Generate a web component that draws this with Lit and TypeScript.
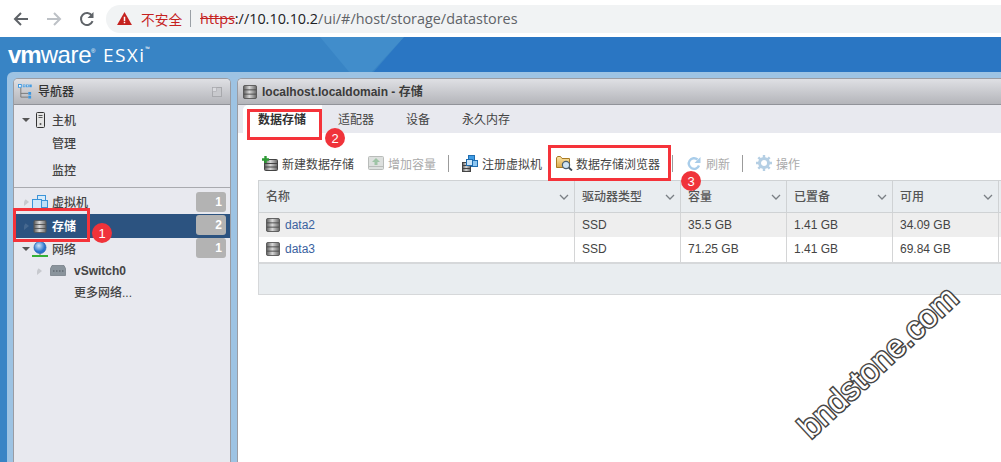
import { LitElement, html, css, svg } from "lit";
import { customElement } from "lit/decorators.js";

const defs = svg`<defs>
<linearGradient id="dbg" x1="0" x2="1" y1="0" y2="0"><stop offset="0" stop-color="#5e5e5e"/><stop offset=".45" stop-color="#d8d8d8"/><stop offset="1" stop-color="#666"/></linearGradient>
<radialGradient id="globe" cx=".4" cy=".35"><stop offset="0" stop-color="#cfe6fb"/><stop offset="1" stop-color="#2a73cc"/></radialGradient>
<linearGradient id="folder" x1="0" x2="0" y1="0" y2="1"><stop offset="0" stop-color="#fbe6a8"/><stop offset="1" stop-color="#dba94a"/></linearGradient>
</defs>`;

const db = (w = 15, h = 15) => html`<svg class="ic" width=${w} height=${h} viewBox="0 0 15 15">
  <rect x=".5" y=".5" width="14" height="14" rx="1.5" fill="url(#dbg)" stroke="#555"/>
  <path d="M1 5.2h13M1 9.8h13" stroke="#4a4a4a" stroke-width="1"/>
</svg>`;

const sortIcon = html`<svg class="chev" width="10" height="6" viewBox="0 0 10 6"><path d="M1 1l4 4 4-4" fill="none" stroke="#7a7f84" stroke-width="1.3"/></svg>`;

@customElement("app-root")
export class AppRoot extends LitElement {
  static styles = css`
    :host { display: block; position: relative; width: 1001px; height: 462px; overflow: hidden; background: #fff;
      font-family: "Liberation Sans", "Noto Sans CJK SC", sans-serif; font-size: 12px; color: #333; }
    .ic { flex: none; display: block; }
    .browser { height: 37px; display: flex; align-items: center; background: #fff; box-sizing: border-box; }
    .navbtns { display: flex; align-items: center; gap: 17px; padding-left: 13px; width: 106px; box-sizing: border-box; flex: none; }
    .pill { flex: 1; height: 28px; margin-right: -30px; border-radius: 14px; background: #f1f3f4; display: flex; align-items: center; padding-left: 11px;
      font-family: "Open Sans", "Noto Sans CJK SC", sans-serif; font-size: 14.4px; }
    .insecure { color: #c5221f; margin-left: 9px; font-family: "Noto Sans CJK SC", sans-serif; font-size: 13.7px; }
    .vsep { width: 1px; height: 17px; background: #9aa0a6; margin: 0 9px 0 8px; }
    .https { color: #c5221f; text-decoration: line-through; }
    .host { color: #202124; }
    .path { color: #5f6368; }
    .page { height: 425px; background: #3884c5; position: relative; display: flex; flex-direction: column; }
    .sky { position: absolute; left: 0; top: 0; }
    .brand { height: 35px; display: flex; align-items: center; padding-left: 8px; color: #fff; position: relative; }
    .vm { font-size: 24px; width: 95px; letter-spacing: -.4px; line-height: 1; display: flex; align-items: baseline; font-family: "Liberation Sans", sans-serif; }
    .vm b { font-weight: 700; letter-spacing: -1px; }
    .vm sup { font-size: 6px; line-height: 1; align-self: flex-start; margin-top: 5px; }
    .esxi { font-size: 19px; letter-spacing: 1.4px; font-family: "Open Sans", sans-serif; display: flex; }
    .esxi sup { font-size: 6px; line-height: 1; margin-top: 4px; letter-spacing: 0; }
    .frame { flex: 1; margin-left: 7px; background: #9dc3e3; border-radius: 6px 0 0 0; padding: 6px 0 0 6px; display: flex; gap: 6px; position: relative; }
    .panel { background: #e8e9ef; border-radius: 5px 5px 0 0; display: flex; flex-direction: column; border: 1px solid #9a9ca3; border-bottom: 0; overflow: hidden; }
    .left { width: 218px; flex: none; box-sizing: border-box; }
    .right { flex: 1; border-right: 0; border-radius: 5px 0 0 0; }
    .phead { height: 26px; flex: none; box-sizing: border-box; display: flex; align-items: center; gap: 5px; background: linear-gradient(#dfe0e4, #b4b5ba); border-bottom: 1px solid #919399;
      font-size: 12px; color: #333; padding: 0 8px 0 4px; font-weight: 500; }
    .phead.main { padding-left: 5px; }
    .phead .t { flex: 1; margin-bottom: 2px; }
    .ptitle { font-weight: 700; color: #3b3b3b; font-size: 12px; }
    .group { display: flex; flex-direction: column; }
    .g1 { padding: 3px 0 5px; border-bottom: 1px solid #a9aaaf; }
    .g2 { padding-top: 2px; }
    .row { height: 24px; display: flex; align-items: center; position: relative; font-weight: 500; color: #444; }
    .tri { width: 0; height: 0; flex: none; margin-left: 8px; }
    .tri.down { border-left: 4px solid transparent; border-right: 4px solid transparent; border-top: 4px solid #555; }
    .tri.right { border-top: 4px solid transparent; border-bottom: 4px solid transparent; border-left: 5px solid #c7c9ce; margin-left: 10px; }
    .icn { width: 20px; display: flex; justify-content: center; flex: none; }
    .icn.w21 { width: 21px; }
    .lbl { margin-left: 2px; margin-bottom: 2px; }
    .sub { padding: 0 0 2px 38px; height: 23px; box-sizing: border-box; }
    .sub2 { margin-top: 3px; height: 24px; }
    .sel { background: #2c5380; color: #fff; font-weight: 700; }
    .sel .tri.right { border-left-color: #46688f; }
    .badge { position: absolute; right: 4px; top: 2px; width: 30px; height: 20px; box-sizing: border-box; background: #b3b3b3; border-radius: 3px; color: #fff; font-weight: 700; font-size: 12px; display: flex; align-items: center; justify-content: flex-end; padding-right: 4px; }
    .sel .badge { top: 1px; }
    .h22 { height: 22px; } .h21 { height: 21px; }
    .h22 .badge { top: 0; }
    .vs { padding-left: 23px; color: #444; font-weight: 700; }
    .vs .tri.right { margin-left: 0; }
    .sw { margin-left: 8px; }
    .vs .lbl { margin-left: 8px; margin-bottom: 0; }
    .more { padding: 0 0 2px 60px; height: 22px; box-sizing: border-box; }
    .tabs { height: 28px; flex: none; display: flex; padding-left: 5px; align-items: flex-end; }
    .tab { height: 28px; display: flex; align-items: center; box-sizing: border-box; padding-bottom: 2px; color: #444; }
    .tab.on { background: #fff; border-radius: 5px 0 0 0; font-weight: 700; color: #333; width: 79px; padding-left: 15px; height: 28px; }
    .tab.w2 { width: 84px; padding-left: 16px; }
    .tab.w3 { width: 56px; }
    .content { flex: 1; background: #fff; padding: 16px 0 0 20px; }
    .tools { height: 28px; margin-bottom: 3px; display: flex; align-items: center; padding-left: 4px; color: #444; }
    .tool { display: flex; align-items: center; gap: 4px; white-space: nowrap; }
    .tool.gapl { margin-left: 14px; }
    .tool.tight { gap: 3px; }
    .dis { color: #aaa; }
    .tsep { width: 1px; height: 17px; background: #9b9b9b; margin: 0 13px 0 12px; }
    table { border-collapse: collapse; table-layout: fixed; width: 744px; color: #444; }
    th { height: 32px; background: #e9edf0; border: 1px solid #cfd2d4; font-weight: 500; text-align: left; padding: 0 7px 2px; position: relative; box-sizing: border-box; color: #555; }
    th .chev { position: absolute; right: 5px; top: 13px; }
    td { height: 24.5px; padding: 0 7px; border-left: 1px solid #d4d5d6; box-sizing: border-box; font-size: 12px; }
    tr.a td { background: #eeeeee; } tr.b td { background: #fff; }
    td:first-child { border-left: 1px solid #cfd2d4; }
    .name { display: flex; align-items: center; gap: 5px; color: #3a62a0; }
    .foot { width: 744px; height: 33px; box-sizing: border-box; background: #e9edf0; border: 1px solid #d6d8da; border-top: 2px solid #d6d8da; }
    .mark { position: absolute; box-sizing: border-box; border: 3px solid #f5333a; pointer-events: none; }
    .m1 { left: 13px; top: 208px; width: 77px; height: 34px; }
    .m2 { left: 247px; top: 109px; width: 75px; height: 31px; }
    .m3 { left: 548px; top: 145px; width: 123px; height: 36px; }
    .dot { position: absolute; width: 20px; height: 20px; border-radius: 50%; background: #f0333a; color: #fff; font-size: 13px; display: flex; align-items: center; justify-content: center; font-family: "Liberation Sans", sans-serif; }
    .d1 { left: 92px; top: 223px; }
    .d2 { left: 325px; top: 128px; }
    .d3 { left: 681px; top: 171px; }
    .wm { position: absolute; left: 766px; top: 344px; width: 224px; text-align: center; transform: rotate(-43deg); font-family: "Liberation Sans", sans-serif; font-weight: 400; font-size: 32px; line-height: 36px; letter-spacing: .3px; color: #fff;
      -webkit-text-stroke: 3px #4a4a4a; paint-order: stroke fill; text-shadow: 1px 1px 1px rgba(0,0,0,.3); white-space: nowrap; }
  `;

  render() {
    return html`
      <svg width="0" height="0" style="position:absolute">${defs}</svg>
      <div class="browser">
        <div class="navbtns">
          <svg class="ic" width="16" height="16" viewBox="0 0 16 16"><path d="M15 8H2M8 2L2 8l6 6" fill="none" stroke="#5f6368" stroke-width="2"/></svg>
          <svg class="ic" width="16" height="16" viewBox="0 0 16 16"><path d="M1 8h13M8 2l6 6-6 6" fill="none" stroke="#bdc1c6" stroke-width="2"/></svg>
          <svg class="ic" width="16" height="16" viewBox="0 0 16 16"><path d="M13.6 10.2A6 6 0 1 1 13 4.6" fill="none" stroke="#5f6368" stroke-width="2"/><path d="M14.5 1v6h-6z" fill="#5f6368"/></svg>
        </div>
        <div class="pill">
          <svg class="ic" width="15" height="13" viewBox="0 0 16 14"><path d="M8 0l8 14H0z" fill="#c5221f"/><path d="M7.2 5h1.6v4.6H7.2zM7.2 10.6h1.6v1.6H7.2z" fill="#fff"/></svg>
          <span class="insecure">不安全</span><span class="vsep"></span>
          <span class="https">https</span><span class="host">://10.10.10.2</span><span class="path">/ui/#/host/storage/datastores</span>
        </div>
      </div>
      <div class="page">
        <svg class="sky" width="1001" height="60" viewBox="0 0 1001 60"><path d="M404 0H1001V60H352z" fill="#2a76c3"/><path d="M320 0H404L360 48z" fill="#418dcb"/></svg>
        <div class="brand">
          <span class="vm"><b>vm</b>ware<sup>®</sup></span>
          <span class="esxi">ESXi<sup>™</sup></span>
        </div>
        <div class="frame">
          <div class="panel left">
            <div class="phead">
              <svg class="ic" width="15" height="17" viewBox="0 0 16 18"><path d="M3 5v10h8M3 11h8" fill="none" stroke="#777"/><rect x=".5" y="1.5" width="3" height="3" fill="#fff" stroke="#3b96df"/><rect x="5.5" y="2" width="2" height="2" fill="#fff" stroke="#3b96df" stroke-width=".8"/><rect x="9" y="2" width="2" height="2" fill="#fff" stroke="#3b96df" stroke-width=".8"/><rect x="12.5" y="2" width="2" height="2" fill="#fff" stroke="#3b96df" stroke-width=".8"/><rect x="11" y="9.500" width="3" height="3" fill="#3b96df"/><rect x="11" y="13.500" width="3" height="3" fill="#3b96df"/></svg>
              <span class="t">导航器</span>
              <svg class="ic" width="10" height="10" viewBox="0 0 10 10"><rect x=".5" y=".5" width="9" height="9" fill="#c8c9cd" stroke="#a8a9ad"/><rect x=".5" y=".5" width="4" height="4" fill="#dadbdf" stroke="#a8a9ad" stroke-width=".6"/></svg>
            </div>
            <div class="group g1">
              <div class="row"><span class="tri down"></span><span class="icn"><svg class="ic" width="9" height="16" viewBox="0 0 9 16"><rect x=".5" y=".5" width="8" height="15" rx="1" fill="#e4e4e4" stroke="#333"/><path d="M2.5 3.500h4M2.5 5.500h4" stroke="#555"/><circle cx="4.5" cy="12" r="1" fill="#555"/></svg></span><span class="lbl">主机</span></div>
              <div class="row sub">管理</div>
              <div class="row sub sub2">监控</div>
            </div>
            <div class="group g2">
              <div class="row"><span class="tri right"></span><span class="icn w21"><svg class="ic" width="16" height="15" viewBox="0 0 16 15"><rect x="5.500" y=".5" width="8" height="7" fill="#d7ebfa" stroke="#3c94d8"/><rect x="8.500" y="5.500" width="7" height="7" fill="#bfe0f8" stroke="#3c94d8"/><rect x=".5" y="4.500" width="9" height="9" fill="#cfe6f9" stroke="#3c94d8"/></svg></span><span class="lbl">虚拟机</span><span class="badge">1</span></div>
              <div class="row sel"><span class="tri right"></span><span class="icn w21">${db(14, 13)}</span><span class="lbl">存储</span><span class="badge">2</span></div>
              <div class="row h22"><span class="tri down"></span><span class="icn"><svg class="ic" width="16" height="16" viewBox="0 0 16 16"><circle cx="8" cy="6.500" r="6" fill="url(#globe)" stroke="#1f5fb0" stroke-width=".7"/><path d="M8 12.500v2" stroke="#666"/><rect x="0" y="14" width="16" height="2" fill="#35b035"/></svg></span><span class="lbl">网络</span><span class="badge">1</span></div>
              <div class="row h21 vs"><span class="tri right"></span><svg class="ic sw" width="16" height="11" viewBox="0 0 16 11"><path d="M2 .5h12l1.500 3v7H.5v-7z" fill="#8a949c" stroke="#6f7880" stroke-width=".7"/><path d="M3 6h1.500M6 6h1.500M9 6h1.500M12 6h1.500" stroke="#4c555c"/></svg><span class="lbl">vSwitch0</span></div>
              <div class="row more">更多网络...</div>
            </div>
          </div>
          <div class="panel right">
            <div class="phead main">
              ${db(14, 14)}
              <span class="t ptitle">localhost.localdomain - 存储</span>
            </div>
            <div class="tabs">
              <div class="tab on">数据存储</div>
              <div class="tab w2">适配器</div>
              <div class="tab w3">设备</div>
              <div class="tab">永久内存</div>
            </div>
            <div class="content">
              <div class="tools">
                <div class="tool"><svg class="ic" width="16" height="15" viewBox="0 0 16 15"><rect x="2.500" y="3.500" width="13" height="11" rx="1" fill="url(#dbg)" stroke="#444"/><path d="M3 7.500h12M3 11h12" stroke="#444"/><path d="M3.500 0v7M0 3.500h7" stroke="#2d9a34" stroke-width="2.400"/></svg><span>新建数据存储</span></div>
                <div class="tool dis gapl"><svg class="ic" width="16" height="14" viewBox="0 0 16 14"><rect x=".5" y=".5" width="15" height="13" rx="1" fill="#dde0de" stroke="#b9bcba"/><path d="M8 2l4 4H9.500v3h-3V6H4z" fill="#9fc4a6"/><path d="M1 10.500h14" stroke="#b9bcba"/></svg><span>增加容量</span></div>
                <span class="tsep"></span>
                <div class="tool"><svg class="ic" width="16" height="17" viewBox="0 0 16 17"><rect x=".5" y="7.500" width="8" height="9" fill="url(#dbg)" stroke="#444"/><path d="M1 10.500h7M1 13.500h7" stroke="#444"/><rect x="6.500" y=".5" width="6" height="6" fill="#3f9ce4" stroke="#1f6db0"/><rect x="9.500" y="5.500" width="6" height="6" fill="#8cc6f1" stroke="#1f6db0"/><rect x="4.500" y="4.500" width="6" height="6" fill="#cbe6fa" stroke="#1f6db0"/></svg><span>注册虚拟机</span></div>
                <div class="tool gapl tight"><svg class="ic" width="17" height="16" viewBox="0 0 17 16"><path d="M.5 3V12.500h13V3.500H6L4.500 1.500H1.500z" fill="url(#folder)" stroke="#a87b24"/><circle cx="10" cy="10" r="3.600" fill="#cfe4f3" stroke="#4a6070" stroke-width="1.200"/><path d="M12.800 12.800L16 15.500" stroke="#3c4a55" stroke-width="1.800"/></svg><span>数据存储浏览器</span></div>
                <span class="tsep"></span>
                <div class="tool dis"><svg class="ic" width="16" height="15" viewBox="0 0 15 15"><path d="M12.500 9.500A5.300 5.300 0 1 1 11 3.500" fill="none" stroke="#a9cdea" stroke-width="2.400"/><path d="M14 1v6H8z" fill="#a9cdea"/></svg><span>刷新</span></div>
                <span class="tsep"></span>
                <div class="tool dis"><svg class="ic" width="16" height="16" viewBox="0 0 16 16"><circle cx="8" cy="8" r="4.500" fill="none" stroke="#b5cfe4" stroke-width="3"/><path d="M8 0v3M8 13v3M0 8h3M13 8h3M2.300 2.300l2.100 2.100M11.600 11.600l2.100 2.100M2.300 13.700l2.100-2.100M11.600 4.400l2.100-2.100" stroke="#b5cfe4" stroke-width="2.400"/></svg><span>操作</span></div>
              </div>
              <table>
                <colgroup><col style="width:316px"/><col style="width:106px"/><col style="width:106px"/><col style="width:106px"/><col style="width:106px"/><col style="width:4px"/></colgroup>
                <tr><th>名称${sortIcon}</th><th>驱动器类型${sortIcon}</th><th>容量${sortIcon}</th><th>已置备${sortIcon}</th><th>可用${sortIcon}</th><th></th></tr>
                <tr class="a"><td><div class="name">${db(14, 14)}data2</div></td><td>SSD</td><td>35.5 GB</td><td>1.41 GB</td><td>34.09 GB</td><td></td></tr>
                <tr class="b"><td><div class="name">${db(14, 14)}data3</div></td><td>SSD</td><td>71.25 GB</td><td>1.41 GB</td><td>69.84 GB</td><td></td></tr>
              </table>
              <div class="foot"></div>
            </div>
          </div>
        </div>
      </div>
      <div class="mark m1"></div><div class="dot d1">1</div>
      <div class="mark m2"></div><div class="dot d2">2</div>
      <div class="mark m3"></div><div class="dot d3">3</div>
      <div class="wm">bndstone.com</div>
    `;
  }
}
